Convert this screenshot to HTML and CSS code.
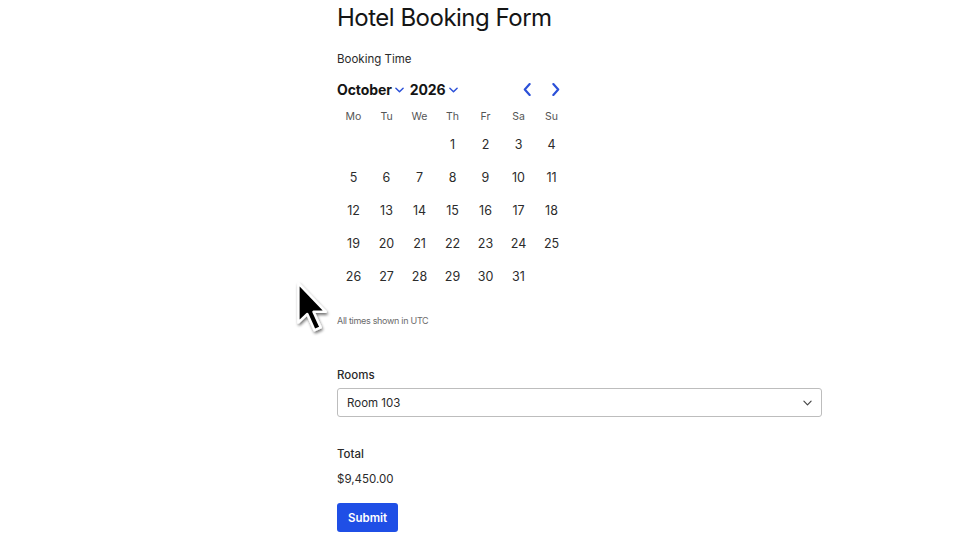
FILE: index.html
```html
<!DOCTYPE html>
<html>
<head>
<meta charset="utf-8">
<link rel="stylesheet" href="styles.css">
</head>
<body>
<main class="form">
  <h1 class="title">Hotel Booking Form</h1>
  <div class="label">Booking Time</div>
  <div class="cal">
    <div class="cal-head">
      <div class="pickers">
        <span class="pick">October<svg class="chev" viewBox="0 0 10 6"><path d="M1 1l4 4 4-4" fill="none" stroke="#2b50d8" stroke-width="1.6" stroke-linecap="round" stroke-linejoin="round"/></svg></span>
        <span class="pick">2026<svg class="chev" viewBox="0 0 10 6"><path d="M1 1l4 4 4-4" fill="none" stroke="#2b50d8" stroke-width="1.6" stroke-linecap="round" stroke-linejoin="round"/></svg></span>
      </div>
      <div class="nav">
        <svg class="arrow" viewBox="0 0 8 12"><path d="M6 1L1.5 6 6 11" fill="none" stroke="#2b50d8" stroke-width="2" stroke-linecap="round" stroke-linejoin="round"/></svg>
        <svg class="arrow" viewBox="0 0 8 12"><path d="M2 1l4.5 5L2 11" fill="none" stroke="#2b50d8" stroke-width="2" stroke-linecap="round" stroke-linejoin="round"/></svg>
      </div>
    </div>
    <div class="grid">
      <div class="dow">Mo</div><div class="dow">Tu</div><div class="dow">We</div><div class="dow">Th</div><div class="dow">Fr</div><div class="dow">Sa</div><div class="dow">Su</div>
      <div class="day"></div><div class="day"></div><div class="day"></div><div class="day">1</div><div class="day">2</div><div class="day">3</div><div class="day">4</div>
      <div class="day">5</div><div class="day">6</div><div class="day">7</div><div class="day">8</div><div class="day">9</div><div class="day">10</div><div class="day">11</div>
      <div class="day">12</div><div class="day">13</div><div class="day">14</div><div class="day">15</div><div class="day">16</div><div class="day">17</div><div class="day">18</div>
      <div class="day">19</div><div class="day">20</div><div class="day">21</div><div class="day">22</div><div class="day">23</div><div class="day">24</div><div class="day">25</div>
      <div class="day">26</div><div class="day">27</div><div class="day">28</div><div class="day">29</div><div class="day">30</div><div class="day">31</div><div class="day"></div>
    </div>
  </div>
  <div class="note">All times shown in UTC</div>

  <div class="label rooms-label">Rooms</div>
  <div class="select">
    <span>Room 103</span>
    <svg class="sel-chev" viewBox="0 0 10 6"><path d="M1 1l4 4 4-4" fill="none" stroke="#444" stroke-width="1.3" stroke-linecap="round" stroke-linejoin="round"/></svg>
  </div>

  <div class="label total-label">Total</div>
  <div class="total">$9,450.00</div>
  <button class="submit">Submit</button>
</main>

<svg class="cursor" viewBox="0 0 34 52" width="38" height="58">
  <defs>
    <filter id="sh" x="-30%" y="-30%" width="160%" height="160%">
      <feGaussianBlur in="SourceAlpha" stdDeviation="1.6"/>
      <feOffset dx="1" dy="2" result="b"/>
      <feComponentTransfer><feFuncA type="linear" slope="0.55"/></feComponentTransfer>
      <feMerge><feMergeNode/><feMergeNode in="SourceGraphic"/></feMerge>
    </filter>
  </defs>
  <path filter="url(#sh)" d="M3 3 L3 38 L11 30.5 L17.5 45 L23 42.5 L16.5 28.5 L27.5 28.5 Z" fill="#000" stroke="#fff" stroke-width="2.2" stroke-linejoin="round"/>
</svg>
</body>
</html>
```

FILE: styles.css
```css
* { box-sizing: border-box; }
html, body { margin: 0; padding: 0; background: #fff; }
body {
  width: 960px;
  height: 540px;
  overflow: hidden;
  position: relative;
  font-family: Inter, "Noto Sans", "Liberation Sans", sans-serif;
  color: #1b1b1b;
}
.form {
  margin-left: 337px;
  width: 485px;
  padding-top: 2px;
}
.title {
  margin: 0;
  font-size: 24px;
  font-weight: 400;
  letter-spacing: -0.5px;
  line-height: 32px;
  color: #151515;
}
.label {
  font-size: 11.5px;
  font-weight: 500;
  color: #2a2a2a;
  line-height: 16px;
}
.title + .label { margin-top: 17px; font-weight: 400; }
.cal { width: 231px; margin-top: 12px; }
.cal-head {
  display: flex;
  justify-content: space-between;
  align-items: center;
  height: 20px;
}
.pickers { display: flex; gap: 6px; }
.pick {
  font-size: 14px;
  font-weight: 700;
  color: #151515;
  display: flex;
  align-items: center;
  letter-spacing: -0.1px;
}
.chev { width: 9px; height: 6px; margin-left: 3px; margin-top: 1px; }
.nav { display: flex; gap: 19px; margin-right: 8px; }
.arrow { width: 9px; height: 13px; }
.grid {
  display: grid;
  grid-template-columns: repeat(7, 33px);
  grid-template-rows: 19px;
  grid-auto-rows: 33px;
  margin-top: 10px;
}
.dow {
  height: 16px;
  font-size: 10.5px;
  color: #555;
  text-align: center;
  line-height: 16px;
  align-self: start;
}
.day {
  font-size: 12.5px;
  color: #2c2c2c;
  display: flex;
  align-items: center;
  justify-content: center;
}
.note {
  margin-top: 22px;
  font-size: 9px;
  color: #6b6b6b;
  letter-spacing: -0.3px;
}
.rooms-label { margin-top: 41px; }
.select {
  margin-top: 5px;
  height: 29px;
  width: 485px;
  border: 1px solid #bdbdbd;
  border-radius: 3px;
  display: flex;
  align-items: center;
  justify-content: space-between;
  padding: 0 9px;
  font-size: 11.5px;
  color: #2a2a2a;
}
.sel-chev { width: 9px; height: 6px; }
.total-label { margin-top: 29px; }
.total {
  margin-top: 9px;
  font-size: 11.5px;
  color: #2a2a2a;
  line-height: 16px;
}
.submit {
  margin-top: 16px;
  width: 61px;
  height: 29px;
  border: none;
  border-radius: 3px;
  background: #1f4fe6;
  color: #fff;
  font-family: inherit;
  font-size: 11.5px;
  font-weight: 600;
  padding: 0;
}
.cursor {
  position: absolute;
  left: 295px;
  top: 280px;
}
```
